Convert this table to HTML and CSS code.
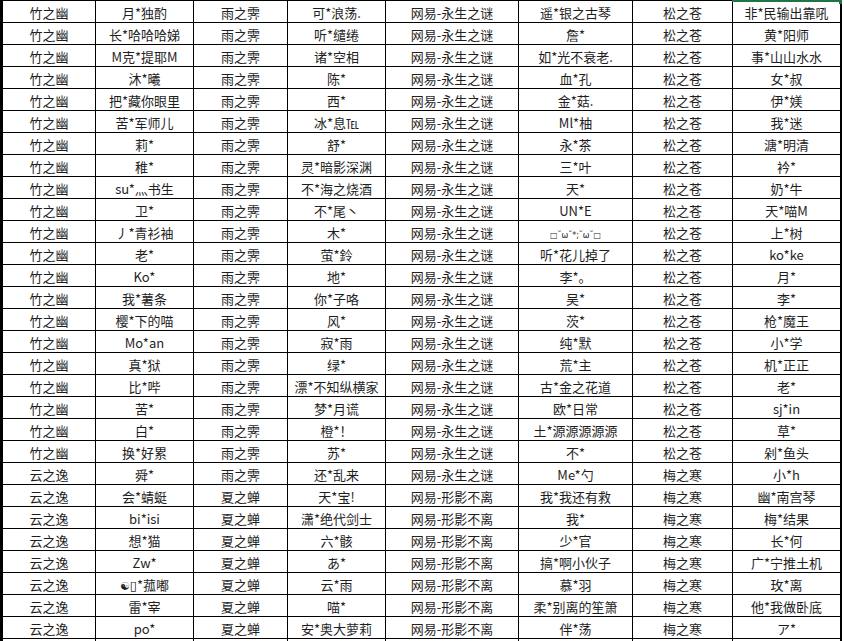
FILE: index.html
```html
<!DOCTYPE html>
<html lang="zh-CN">
<head>
<meta charset="utf-8">
<title>名单</title>
<link rel="stylesheet" href="styles.css">
</head>
<body>
<div class="sheet">
  <div class="sel-line"></div>
  <div class="sel-handle"></div>

  <div class="c">竹之幽</div><div class="c">月*独酌</div><div class="c">雨之霁</div><div class="c">可*浪荡.</div><div class="c">网易-永生之谜</div><div class="c">遥*银之古琴</div><div class="c">松之苍</div><div class="c">非*民输出靠吼</div>
  <div class="c">竹之幽</div><div class="c">长*哈哈哈娣</div><div class="c">雨之霁</div><div class="c">听*缱绻</div><div class="c">网易-永生之谜</div><div class="c">詹*</div><div class="c">松之苍</div><div class="c">黄*阳师</div>
  <div class="c">竹之幽</div><div class="c">M克*提耶M</div><div class="c">雨之霁</div><div class="c">诸*空相</div><div class="c">网易-永生之谜</div><div class="c">如*光不衰老.</div><div class="c">松之苍</div><div class="c">事*山山水水</div>
  <div class="c">竹之幽</div><div class="c">沐*曦</div><div class="c">雨之霁</div><div class="c">陈*</div><div class="c">网易-永生之谜</div><div class="c">血*孔</div><div class="c">松之苍</div><div class="c">女*叔</div>
  <div class="c">竹之幽</div><div class="c">把*藏你眼里</div><div class="c">雨之霁</div><div class="c">西*</div><div class="c">网易-永生之谜</div><div class="c">金*菇.</div><div class="c">松之苍</div><div class="c">伊*媄</div>
  <div class="c">竹之幽</div><div class="c">苦*军师儿</div><div class="c">雨之霁</div><div class="c">冰*息℡</div><div class="c">网易-永生之谜</div><div class="c">Ml*柚</div><div class="c">松之苍</div><div class="c">我*迷</div>
  <div class="c">竹之幽</div><div class="c">莉*</div><div class="c">雨之霁</div><div class="c">舒*</div><div class="c">网易-永生之谜</div><div class="c">永*茶</div><div class="c">松之苍</div><div class="c">溏*明清</div>
  <div class="c">竹之幽</div><div class="c">稚*</div><div class="c">雨之霁</div><div class="c">灵*暗影深渊</div><div class="c">网易-永生之谜</div><div class="c">三*叶</div><div class="c">松之苍</div><div class="c">衿*</div>
  <div class="c">竹之幽</div><div class="c">su*灬书生</div><div class="c">雨之霁</div><div class="c">不*海之烧酒</div><div class="c">网易-永生之谜</div><div class="c">天*</div><div class="c">松之苍</div><div class="c">奶*牛</div>
  <div class="c">竹之幽</div><div class="c">卫*</div><div class="c">雨之霁</div><div class="c">不*尾丶</div><div class="c">网易-永生之谜</div><div class="c">UN*E</div><div class="c">松之苍</div><div class="c">天*喵M</div>
  <div class="c">竹之幽</div><div class="c">丿*青衫袖</div><div class="c">雨之霁</div><div class="c">木*</div><div class="c">网易-永生之谜</div><div class="c"><span class="tiny">□˘ω˘*;˘ω˘□</span></div><div class="c">松之苍</div><div class="c">上*树</div>
  <div class="c">竹之幽</div><div class="c">老*</div><div class="c">雨之霁</div><div class="c">萤*鈴</div><div class="c">网易-永生之谜</div><div class="c">听*花儿掉了</div><div class="c">松之苍</div><div class="c">ko*ke</div>
  <div class="c">竹之幽</div><div class="c">Ko*</div><div class="c">雨之霁</div><div class="c">地*</div><div class="c">网易-永生之谜</div><div class="c">李*。</div><div class="c">松之苍</div><div class="c">月*</div>
  <div class="c">竹之幽</div><div class="c">我*薯条</div><div class="c">雨之霁</div><div class="c">你*子咯</div><div class="c">网易-永生之谜</div><div class="c">吴*</div><div class="c">松之苍</div><div class="c">李*</div>
  <div class="c">竹之幽</div><div class="c">樱*下的喵</div><div class="c">雨之霁</div><div class="c">风*</div><div class="c">网易-永生之谜</div><div class="c">茨*</div><div class="c">松之苍</div><div class="c">枪*魔王</div>
  <div class="c">竹之幽</div><div class="c">Mo*an</div><div class="c">雨之霁</div><div class="c">寂*雨</div><div class="c">网易-永生之谜</div><div class="c">纯*默</div><div class="c">松之苍</div><div class="c">小*学</div>
  <div class="c">竹之幽</div><div class="c">真*狱</div><div class="c">雨之霁</div><div class="c">绿*</div><div class="c">网易-永生之谜</div><div class="c">荒*主</div><div class="c">松之苍</div><div class="c">机*正正</div>
  <div class="c">竹之幽</div><div class="c">比*哔</div><div class="c">雨之霁</div><div class="c">漂*不知纵横家</div><div class="c">网易-永生之谜</div><div class="c">古*金之花道</div><div class="c">松之苍</div><div class="c">老*</div>
  <div class="c">竹之幽</div><div class="c">苦*</div><div class="c">雨之霁</div><div class="c">梦*月谎</div><div class="c">网易-永生之谜</div><div class="c">欧*日常</div><div class="c">松之苍</div><div class="c">sj*in</div>
  <div class="c">竹之幽</div><div class="c">白*</div><div class="c">雨之霁</div><div class="c">橙*！</div><div class="c">网易-永生之谜</div><div class="c">土*源源源源源</div><div class="c">松之苍</div><div class="c">草*</div>
  <div class="c">竹之幽</div><div class="c">换*好累</div><div class="c">雨之霁</div><div class="c">苏*</div><div class="c">网易-永生之谜</div><div class="c">不*</div><div class="c">松之苍</div><div class="c">剁*鱼头</div>
  <div class="c">云之逸</div><div class="c">舜*</div><div class="c">雨之霁</div><div class="c">还*乱来</div><div class="c">网易-永生之谜</div><div class="c">Me*勺</div><div class="c">梅之寒</div><div class="c">小*h</div>
  <div class="c">云之逸</div><div class="c">会*蜻蜓</div><div class="c">夏之蝉</div><div class="c">天*宝!</div><div class="c">网易-形影不离</div><div class="c">我*我还有救</div><div class="c">梅之寒</div><div class="c">幽*南宫琴</div>
  <div class="c">云之逸</div><div class="c">bi*isi</div><div class="c">夏之蝉</div><div class="c">潇*绝代剑士</div><div class="c">网易-形影不离</div><div class="c">我*</div><div class="c">梅之寒</div><div class="c">梅*结果</div>
  <div class="c">云之逸</div><div class="c">想*猫</div><div class="c">夏之蝉</div><div class="c">六*骸</div><div class="c">网易-形影不离</div><div class="c">少*官</div><div class="c">梅之寒</div><div class="c">长*何</div>
  <div class="c">云之逸</div><div class="c">Zw*</div><div class="c">夏之蝉</div><div class="c">あ*</div><div class="c">网易-形影不离</div><div class="c">搞*啊小伙子</div><div class="c">梅之寒</div><div class="c">广*宁推土机</div>
  <div class="c">云之逸</div><div class="c"><span class="sym">☯</span>▯*菰嘟</div><div class="c">夏之蝉</div><div class="c">云*雨</div><div class="c">网易-形影不离</div><div class="c">慕*羽</div><div class="c">梅之寒</div><div class="c">玫*离</div>
  <div class="c">云之逸</div><div class="c">雷*宰</div><div class="c">夏之蝉</div><div class="c">喵*</div><div class="c">网易-形影不离</div><div class="c">柔*别离的笙箫</div><div class="c">梅之寒</div><div class="c">他*我做卧底</div>
  <div class="c">云之逸</div><div class="c">po*</div><div class="c">夏之蝉</div><div class="c">安*奥大萝莉</div><div class="c">网易-形影不离</div><div class="c">伴*荡</div><div class="c">梅之寒</div><div class="c">ア*</div>
  <div class="c"></div><div class="c"></div><div class="c"></div><div class="c"></div><div class="c"></div><div class="c"></div><div class="c"></div><div class="c"></div>
</div>
</body>
</html>
```

FILE: styles.css
```css
html, body {
  margin: 0;
  padding: 0;
  background: #ffffff;
  overflow: hidden;
}

body {
  font-family: "Noto Sans CJK SC", "Noto Sans", "DejaVu Sans", sans-serif;
  color: #1e1e1e;
}

.sheet {
  position: relative;
  display: grid;
  grid-template-columns: 92px 97px 93px 97px 132px 113px 99px 107px;
  grid-auto-rows: 21px;
  gap: 1px;
  width: fit-content;
  background: #000000;
  border-top: 1px solid #000000;
  border-left: 3px solid #000000;
  border-right: 2px solid #000000;
}

.c {
  background: #ffffff;
  font-size: 13px;
  line-height: 21px;
  padding-top: 1px;
  height: 20px;
  text-align: center;
  white-space: nowrap;
  overflow: hidden;
}

.tiny {
  font-size: 8px;
  letter-spacing: 0;
  font-family: "DejaVu Sans", sans-serif;
}

.sym {
  font-family: "DejaVu Sans", sans-serif;
  font-size: 11px;
}

.sel-line {
  position: absolute;
  left: 729px;
  top: -1px;
  width: 110px;
  height: 2px;
  background: #217346;
  z-index: 2;
}

.sel-handle {
  position: absolute;
  left: 836px;
  top: -1px;
  width: 3px;
  height: 4px;
  background: #217346;
  z-index: 2;
}
```
